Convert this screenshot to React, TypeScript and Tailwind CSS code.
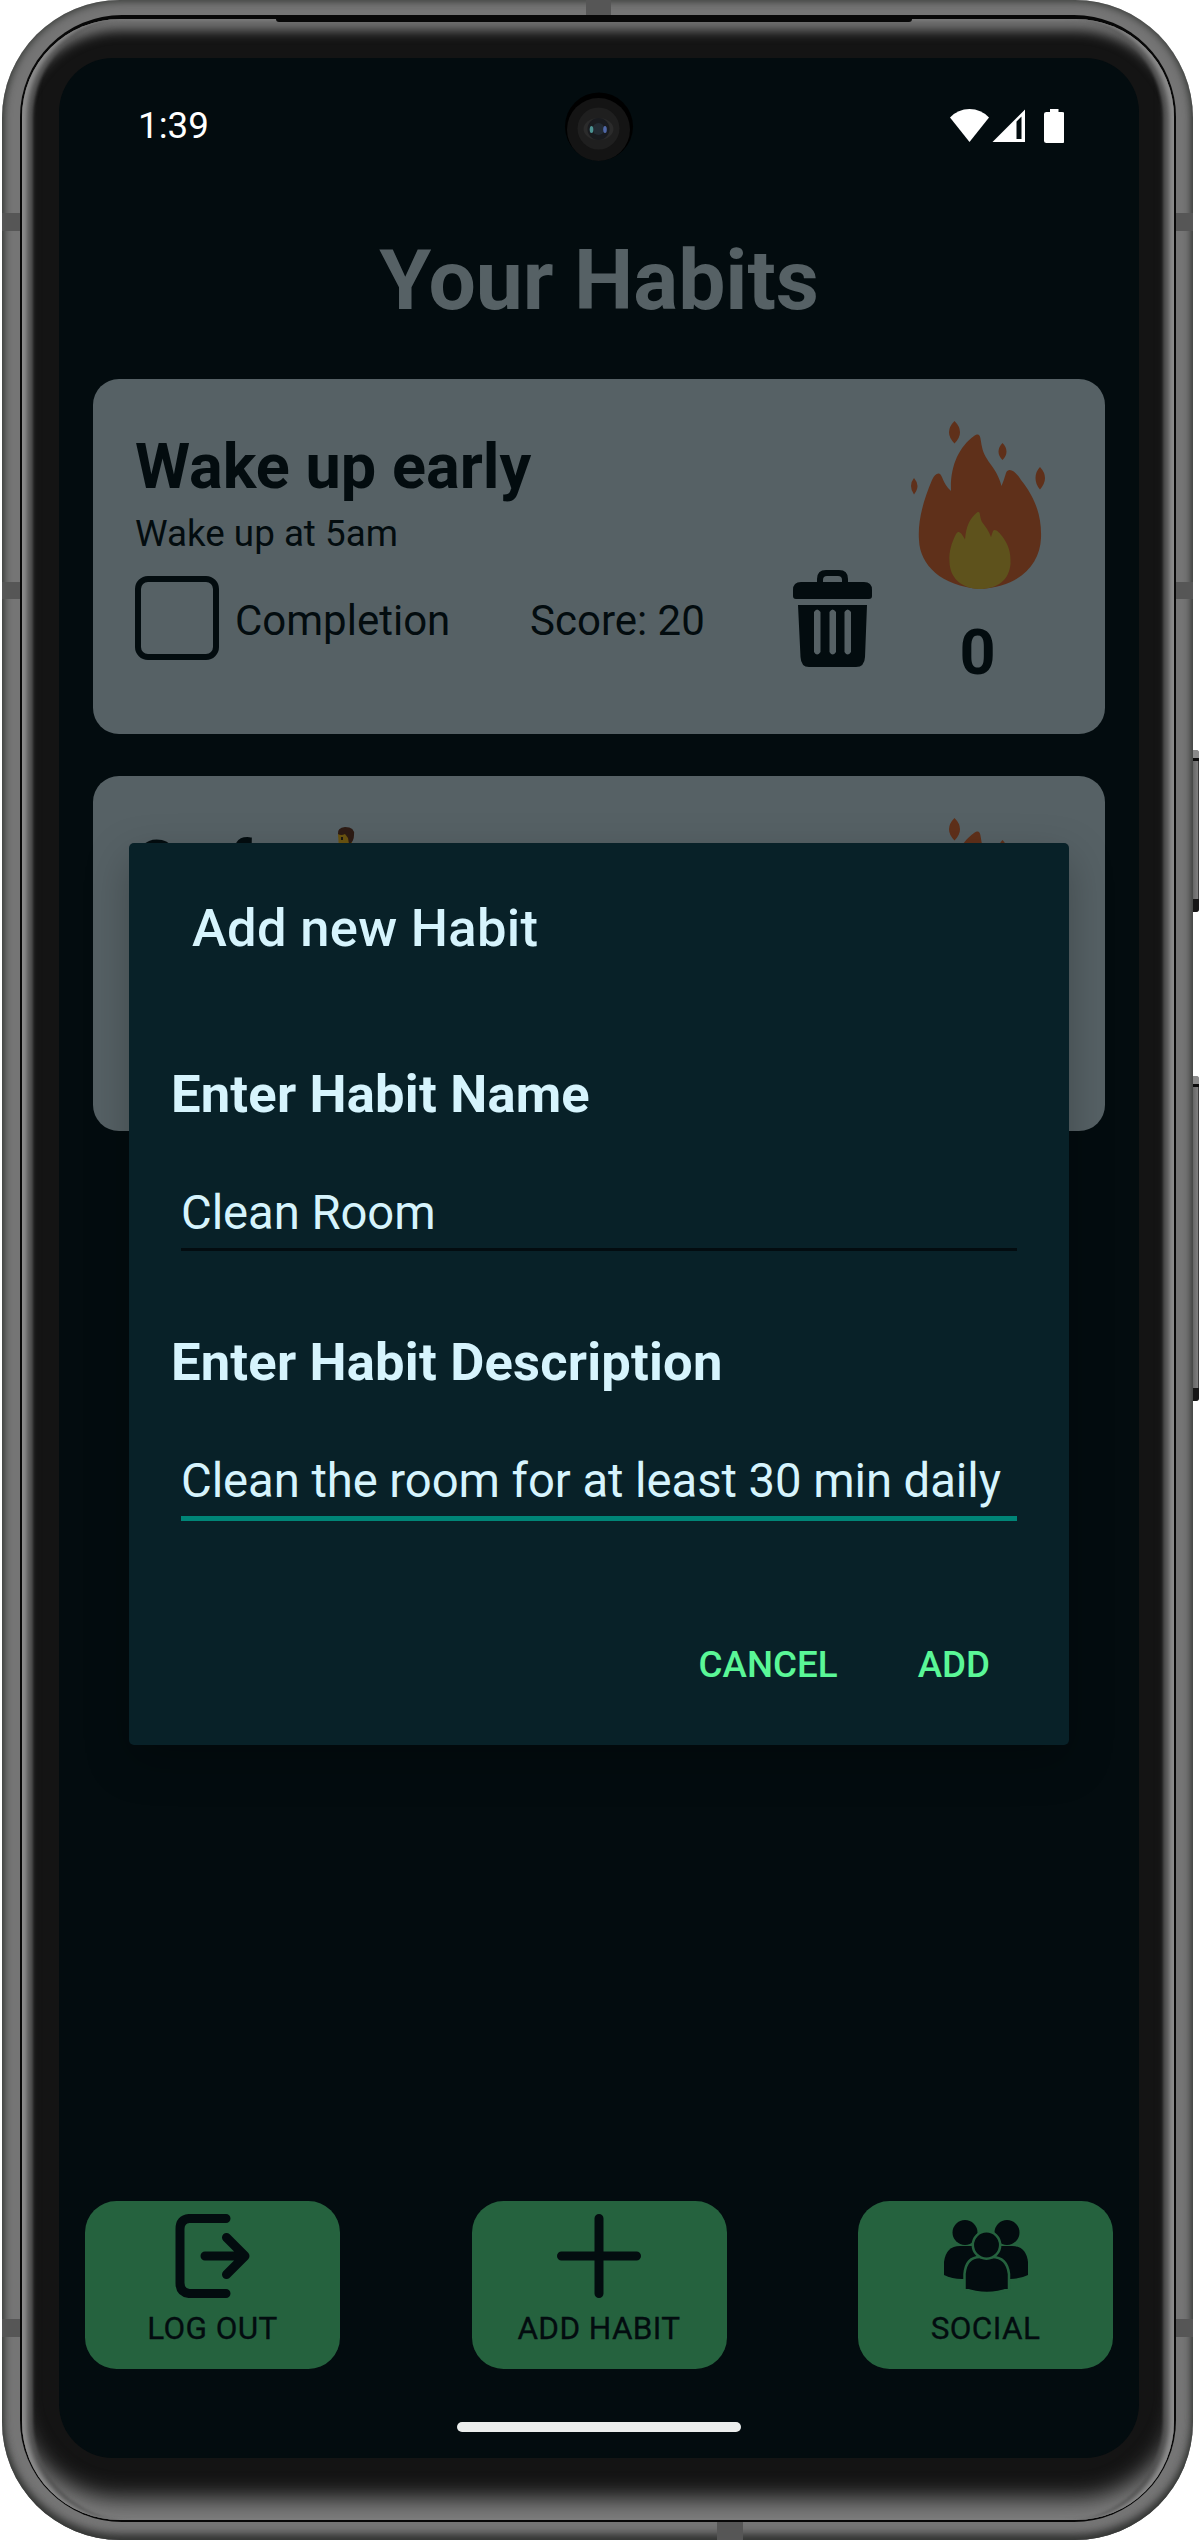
import { ReactNode } from "react";

function Antenna({ className }: { className: string }) {
  return <div className={`absolute bg-[#565656] ${className}`} />;
}

/** A hardware key on the right edge of the phone. */
function SideKey({ className }: { className: string }) {
  return (
    <div className={`absolute left-[1191px] flex w-[8px] flex-col overflow-hidden rounded-r-[3px] bg-gradient-to-r from-[#5c5c5c] to-[#868686] ${className}`}>
      <div className="h-[8px] bg-[#8a8a8a]" />
      <div className="h-[3px] bg-[#0c0c0c]" />
      <div className="flex-1 border-r border-[#3c3c3c]" />
      <div className="h-[13px] bg-[#161616]" />
    </div>
  );
}

function StatusBar() {
  return (
    <div className="relative flex h-[136px] items-center justify-between pl-[79px] pr-[75px] text-white">
      <span className="pt-[1px] text-[36.75px] leading-none">1:39</span>
      <svg className="h-[36px] w-[114px]" viewBox="0 0 114 36" fill="#fff">
        <path d="M0 9.500Q8 1 19.500 1T39 9.500L19.500 34Z" />
        <path fillRule="evenodd" d="M42.500 34 75 1.500V34ZM66.500 13.500V31H71.500V8.500Z" />
        <path d="M100 1h8.500v3H112q2.500 0 2.500 2v27q0 2-2.500 2H96.500q-2.500 0-2.500-2V6q0-2 2.500-2h3.500Z" />
      </svg>
      <svg className="absolute left-[505px] top-[33px] h-[72px] w-[70px]" viewBox="0 0 70 72">
        <circle cx="35" cy="35.500" r="34" fill="#000" />
        <circle cx="34.500" cy="38.500" r="31.500" fill="#141414" />
        <circle cx="34.500" cy="37.500" r="21" fill="#1f1f1f" />
        <ellipse cx="34.500" cy="38" rx="15" ry="11" fill="#2b2b2b" />
        <circle cx="34.500" cy="38" r="11" fill="#191b1f" />
        <circle cx="34.500" cy="38" r="6" fill="#222a33" />
        <ellipse cx="27.500" cy="38.500" rx="1.800" ry="3.500" fill="#4c9292" />
        <ellipse cx="41" cy="38.500" rx="1.800" ry="3.500" fill="#5068a8" />
      </svg>
    </div>
  );
}

function Fire() {
  return (
    <svg className="h-[168px] w-[134px] shrink-0" viewBox="912 421 134 168" fill="#5f301a">
      <path d="M955.500 421q5.500 5.500 5.500 11.200t-5.500 11.200q-5.500-5.500-5.500-11.200t5.500-11.200ZM1003.500 443q4 4 4 8.500t-4 8.500q-4-4-4-8.500t4-8.500ZM1041 467q5 5.500 5 11t-5 11.500q-4.500-5-4.500-11.500t4.500-11ZM915 478q3.500 4 3.500 8t-3.500 8.500q-3-4-3-8.500t3-8Z" />
      <path d="M981 589C942 586 921 565 920 540C918.500 520 925 499 933 480Q936 473 940 473.500C944 475 943 483 952 491C951 466 960 447 975 436C982 431.500 981 438 983 447C986 462 998 467 1002.500 486Q1005 480 1007 473C1010 466 1018 473 1022 480C1034 495 1043 513 1042 538C1041 565 1020 587 981 589Z" />
      <path fill="#5e521c" d="M980 589C961 588 951 577 950.500 562C949.500 551 953 542 957 534C960 529 963 534 966 539.500C967 526 971 518 978 512.500C982 510.500 980 516 983 522C986 526 990 531 992 537L994 531C996 528 1000 532 1003 536C1009 544 1012 551 1011.500 564C1010 580 999 589 980 589Z" />
    </svg>
  );
}

function Trash() {
  return (
    <svg className="h-[97px] w-[79px]" viewBox="0 0 79 97" fill="#030c0f">
      <path fillRule="evenodd" d="M0 26V20Q0 12 8 12H24V9Q24 0 33 0H46Q55 0 55 9V12H71Q79 12 79 20V26Q79 29 76 29H3Q0 29 0 26ZM30 12H49V10Q49 6 45 6H34Q30 6 30 10Z" />
      <path fillRule="evenodd" d="M5 35H74L72 87Q71.500 97 63 97H16Q8 97 7.500 87ZM21 42V82q3 5 6.500 0V42q-3.500-5-6.500 0ZM36.500 42V82q3 5 6.500 0V42q-3.500-5-6.500 0ZM51.500 42V82q3 5 6.500 0V42q-3.500-5-6.500 0Z" />
    </svg>
  );
}

/** Running figure that follows the second habit's title. */
function Runner() {
  return (
    <svg className="ml-[27px] mt-[-2px] h-[74px] w-[60px]" viewBox="0 0 60 74">
      <path fill="#6b5410" d="M1 8h14v14H2Z" />
      <path fill="#2d1b14" d="M1 8Q0 2 8 1Q18 1 17 9Q17 16 12 18L11 12L8 8Q4 10 1 8Z" />
      <path fill="#1c1a12" d="M4 11h2v3H4Z" />
    </svg>
  );
}

function HabitCard({ title, note, score, icon }: { title: string; note?: string; score?: number; icon?: ReactNode }) {
  return (
    <section className="flex h-[355px] rounded-[26px] bg-[#566165] pl-[42px] pr-[60px] pt-[42px]">
      <div className="flex-1">
        <div className="flex h-[86px] items-center pt-[5px]">
          <h2 className="text-[63px] font-bold leading-[74px]">{title}</h2>
          {icon}
        </div>
        {note && <p className="mt-[5px] text-[36.75px] leading-[44px]">{note}</p>}
        {score !== undefined && (
          <div className="mt-[20px] flex items-center text-[42px]">
            <div className="h-[84px] w-[84px] rounded-[13px] border-[6px] border-[#030c0f]" />
            <span className="ml-[16px] w-[295px] pt-[5px]">Completion</span>
            <span className="pt-[5px]">Score: {score}</span>
          </div>
        )}
      </div>
      <div className="mr-[39px] mt-[149px]">
        <Trash />
      </div>
      <div className="flex flex-col items-center">
        <Fire />
        {score !== undefined && <span className="mr-[1px] mt-[27px] text-[63px] font-bold leading-[74px]">0</span>}
      </div>
    </section>
  );
}

function Field({ label, value, active }: { label: string; value: string; active?: boolean }) {
  return (
    <div className="h-[268px]">
      <div className="text-[52.5px] font-bold leading-[62px] tracking-[0.2px]">{label}</div>
      <div
        className={
          active
            ? "ml-[10px] mt-[52px] h-[76px] w-[836px] border-b-[5px] border-[#008577] pt-[8px] text-[47.25px] leading-[56px] tracking-[-0.07px] whitespace-nowrap"
            : "ml-[10px] mt-[52px] h-[74px] w-[836px] border-b-[3px] border-[#030c10] pt-[8px] text-[47.25px] leading-[56px] tracking-[-0.07px] whitespace-nowrap"
        }
      >
        {value}
      </div>
    </div>
  );
}

function Dialog() {
  return (
    <div className="absolute left-[70px] top-[785px] flex h-[902px] w-[940px] flex-col rounded-[5px] bg-[#082128] pl-[42px] pr-[52px] text-[#d6f4fd] shadow-[0_16px_44px_rgba(0,0,0,0.25)]">
      <h3 className="ml-[21px] mt-[54px] text-[52.5px] font-medium leading-[62px] tracking-[0.3px]">Add new Habit</h3>
      <div className="mt-[104px]">
        <Field label="Enter Habit Name" value="Clean Room" />
        <Field label="Enter Habit Description" value="Clean the room for at least 30 min daily" active />
      </div>
      <div className="mt-[44px] flex justify-end gap-[80px] pr-[27px] text-[36.75px] font-medium leading-[44px] text-[#5af797]">
        <span>CANCEL</span>
        <span>ADD</span>
      </div>
    </div>
  );
}

function NavButton({ label, children }: { label: string; children: ReactNode }) {
  return (
    <div className="flex h-[168px] w-[255px] flex-col items-center rounded-[31.5px] bg-[#25623e] pt-[13px]">
      <svg className="h-[84px] w-[84px]" viewBox="0 0 84 84" fill="none" stroke="#030c0f" strokeWidth="9" strokeLinecap="round" strokeLinejoin="round">
        {children}
      </svg>
      <span className="mt-[12px] text-[31.5px] leading-[37px] tracking-[0.4px] [-webkit-text-stroke:0.3px_#030c0f]">{label}</span>
    </div>
  );
}

export default function App() {
  return (
    <div className="relative h-[2541px] w-[1200px] bg-white pl-[1.5px] font-['Roboto',sans-serif] text-[#030c0f]">
      <SideKey className="top-[750px] h-[162px]" />
      <SideKey className="top-[1076px] h-[325px]" />
      <div className="relative h-[2540px] w-[1191px] rounded-[118px] bg-[#757575] pb-[18px] pl-[18.5px] pr-[17px] pt-[15px] shadow-[inset_0_0_8px_1px_#303330,inset_0_-8px_8px_-2px_#3c3c3c]">
        <Antenna className="left-0 top-[213px] h-[18px] w-[1191px]" />
        <Antenna className="left-0 top-[582px] h-[17px] w-[1191px]" />
        <Antenna className="left-0 top-[2319px] h-[18px] w-[1191px]" />
        <Antenna className="left-[584px] top-0 h-[17px] w-[25px]" />
        <Antenna className="left-[715px] top-[2520px] h-[20px] w-[26px]" />
        <div className="relative h-full rounded-[102px] bg-[#080808] px-[2px] pb-[2px] pt-[4px]">
          <div className="relative h-full rounded-[98px] bg-[#141414] pl-[37px] pt-[39px] shadow-[inset_6px_0_4px_-1px_#8c8c8c,inset_-6px_0_4px_-1px_#8c8c8c,inset_12px_0_3px_-1px_#525252,inset_-12px_0_3px_-1px_#525252,inset_0_17px_12px_-5px_#727272,inset_0_-28px_22px_-6px_#7c7c7c]">
            <div className="absolute left-[254px] top-0 h-[3px] w-[636px] rounded-b-[3px] bg-[#080808]" />
            <main className="relative flex h-[2400px] w-[1080px] flex-col overflow-hidden rounded-[54px] bg-[#030c0f]">
              <StatusBar />
              <h1 className="mt-[38px] text-center text-[84px] font-bold leading-[98px] tracking-[-0.1px] text-[#566165]">Your Habits</h1>
              <div className="mt-[49px] flex flex-col gap-[42px] px-[34px]">
                <HabitCard title="Wake up early" note="Wake up at 5am" score={20} />
                <HabitCard title="Go for" icon={<Runner />} />
              </div>
              <nav className="mt-auto flex justify-between px-[26px] pb-[53px]">
                <NavButton label="LOG OUT">
                  <path d="M55 4.500H18Q9 5.500 9 15V69Q9 78.500 18 79.500H55M34 42H74M55.500 23.500 74 42 55.500 60.500" />
                </NavButton>
                <NavButton label="ADD HABIT">
                  <path d="M42 4.500V79.500M4.500 42H79.500" />
                </NavButton>
                <NavButton label="SOCIAL">
                  <g fill="#030c0f" stroke="none">
                    <circle cx="21" cy="18.500" r="12.500" />
                    <circle cx="63" cy="18.500" r="12.500" />
                    <path d="M0 61V48Q2 32 16 32H68Q82 32 84 48V61Q76 65 66 65H18Q8 65 0 61Z" />
                    <g stroke="#25623e" strokeWidth="2.500">
                      <path d="M20.500 75V60Q22 43 36 43H48Q63 43 65 60V75Q43 83 20.500 75Z" />
                      <circle cx="42.500" cy="31" r="13.700" />
                    </g>
                  </g>
                </NavButton>
              </nav>
              <div className="mb-[26px] flex justify-center">
                <div className="h-[10px] w-[284px] rounded-full bg-[#ebeeed]" />
              </div>
              <Dialog />
            </main>
          </div>
        </div>
      </div>
    </div>
  );
}
